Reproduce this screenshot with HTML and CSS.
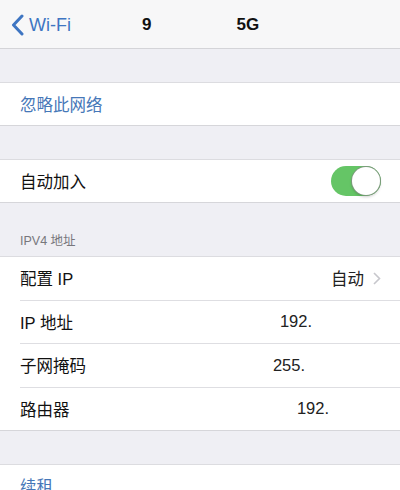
FILE: index.html
```html
<!DOCTYPE html>
<html lang="zh">
<head>
  <meta charset="UTF-8">
  <title>Wi-Fi</title>
  <link rel="stylesheet" href="styles.css">
</head>
<body>
  <!-- Barra de navegación -->
  <div class="nav">
    <a class="back">
      <svg width="13" height="22" viewBox="0 0 13 22"><path d="M11 2 L2.5 11 L11 20" fill="none" stroke="#3e75c2" stroke-width="3" stroke-linecap="round" stroke-linejoin="round"/></svg>
      <span>Wi-Fi</span>
    </a>
    <div class="title">
      <span class="t1">9</span>
      <span class="t2">5G</span>
    </div>
  </div>

  <div class="gap"></div>
  <div class="group">
    <div class="row link">忽略此网络</div>
  </div>

  <div class="gap"></div>
  <div class="group">
    <div class="row">
      <span>自动加入</span>
      <span class="switch"><span class="knob"></span></span>
    </div>
  </div>

  <div class="header">IPV4 地址</div>
  <div class="group">
    <div class="row tall inset">
      <span>配置 IP</span>
      <span class="detail">自动
        <svg width="8" height="13" viewBox="0 0 8 13"><path d="M1 1 L6.5 6.5 L1 12" fill="none" stroke="#c7c7cc" stroke-width="1.6"/></svg>
      </span>
    </div>
    <div class="row tall inset">
      <span>IP 地址</span>
      <span class="value v-ip">192.</span>
    </div>
    <div class="row tall inset">
      <span>子网掩码</span>
      <span class="value v-mask">255.</span>
    </div>
    <div class="row tall">
      <span>路由器</span>
      <span class="value v-router">192.</span>
    </div>
  </div>

  <div class="gap"></div>
  <div class="group">
    <div class="row link">续租</div>
  </div>
</body>
</html>
```

FILE: styles.css
```css
body {
  margin: 0;
  background-color: #efeff4;
  font-family: 'Liberation Sans', 'Noto Sans CJK SC', sans-serif;
  color: #111;
  overflow: hidden;
}
.nav {
  height: 48px;
  background-color: #f7f7f8;
  border-bottom: 1px solid #d4d4d8;
  display: flex;
  align-items: center;
  padding-left: 11px;
}
.back {
  display: flex;
  align-items: center;
  gap: 5px;
  color: #3e75c2;
  font-size: 18px;
  width: 120px;
  margin-top: 2px;
}
.title {
  display: flex;
  font-weight: bold;
  font-size: 17px;
  margin-top: 2px;
}
.t1 {
  margin-left: 11px;
}
.t2 {
  margin-left: 85px;
}
.gap {
  height: 33px;
}
.group {
  background-color: #fff;
  border-top: 1px solid #dcdce0;
  border-bottom: 1px solid #d6d6da;
}
.row {
  height: 42px;
  display: flex;
  align-items: center;
  justify-content: space-between;
  padding: 0 19px 0 20px;
  font-size: 16.5px;
  position: relative;
}
.row.tall {
  height: 42.5px;
}
.row.inset::after {
  content: '';
  position: absolute;
  left: 20px;
  right: 0;
  bottom: -1px;
  border-bottom: 1px solid #dedee2;
}
.row.inset {
  margin-bottom: 1px;
}
.link {
  color: #4677b8;
}
.header {
  height: 33px;
  padding: 20px 20px 0;
  font-size: 12.5px;
  color: #77777c;
  line-height: 36px;
}
.switch {
  width: 50px;
  height: 30px;
  border-radius: 15px;
  background-color: #65c566;
  display: flex;
  align-items: center;
  justify-content: flex-end;
  padding: 0 1px;
  box-sizing: border-box;
}
.knob {
  width: 28px;
  height: 28px;
  border-radius: 50%;
  background-color: #fff;
  box-shadow: 0 0 0 1px #7d9a7d, 0 2px 3px rgba(0, 0, 0, 0.2);
}
.detail {
  display: flex;
  align-items: center;
  gap: 9px;
  color: #222;
}
.value {
  color: #222;
}
.v-ip {
  margin-right: 69px;
}
.v-mask {
  margin-right: 76px;
}
.v-router {
  margin-right: 52px;
}
```
